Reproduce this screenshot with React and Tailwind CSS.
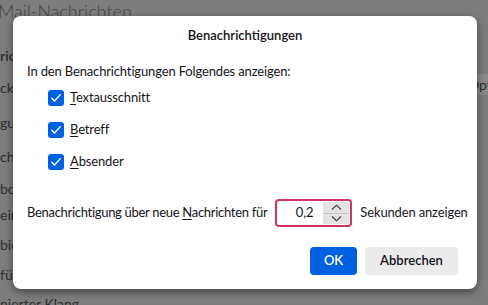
import React from "react";

const bgItems = [
    { text: "ric", h: "h-[32px]", bold: true },
    { text: "ck-", h: "h-[35px]" },
    { text: "gu", h: "h-[34px]" },
    { text: "chr", h: "h-[32px]" },
    { text: "bo", h: "h-[26px]" },
    { text: "ein", h: "h-[30px]" },
    { text: "bie", h: "h-[30px]" },
    { text: "fü", h: "h-[29px]" },
    { text: "nierter Klang", h: "h-[30px]" },
];

const Check = () => (
    <span className="flex h-[16px] w-[16px] items-center justify-center rounded-[3px] bg-[#0061e0]">
        <svg width="12" height="12" viewBox="0 0 12 12" fill="none">
            <path d="M1.8 6.2 L4.6 9 L10.3 2.6" stroke="white" strokeWidth="1.4" strokeLinecap="round" strokeLinejoin="round" />
        </svg>
    </span>
);

const CheckRow = ({ first, rest }) => (
    <label className="flex h-[32px] items-center gap-[6px]">
        <Check />
        <span>
            <u className="underline-offset-2">{first}</u>
            {rest}
        </span>
    </label>
);

const App = () => {
    return (
        <div className="relative h-[305px] w-[488px] overflow-hidden whitespace-nowrap bg-[#7d7d7d] font-['Lato',sans-serif] text-[#2e2e2e]">
            {/* page behind the dialog */}
            <div className="ml-[-2px] text-[18px] font-light leading-[22px] text-[#454545]">Mail-Nachrichten</div>
            <div className="flex flex-col pt-[24px] text-[14px] leading-[20px]">
                {bgItems.map((item) => (
                    <div key={item.text} className={`${item.h} ${item.bold ? "font-semibold" : ""}`}>
                        {item.text}
                    </div>
                ))}
            </div>
            <div className="absolute left-[464px] top-[74px] flex h-[21px] w-[50px] items-center bg-[#8a8a8a] pl-[4px] text-[14px] text-[#2e2e2e]">
                Opti
            </div>

            {/* dialog */}
            <div className="absolute left-[13px] top-[16px] flex h-[273px] w-[464px] flex-col rounded-[8px] bg-white px-[14px] text-[13px] tracking-[-0.15px] text-[#15141a] shadow-[0_3px_8px_rgba(0,0,0,0.45)]">
                <h1 className="pt-[9px] text-center text-[13px] font-semibold leading-[20px] tracking-normal">Benachrichtigungen</h1>
                <p className="mt-[16px] leading-[20px]">In den Benachrichtigungen Folgendes anzeigen:</p>
                <div className="mt-[1px] flex flex-col pl-[21px]">
                    <CheckRow first="T" rest="extausschnitt" />
                    <CheckRow first="B" rest="etreff" />
                    <CheckRow first="A" rest="bsender" />
                </div>
                <div className="mt-[21px] flex items-center">
                    <span className="tracking-[-0.3px]">
                        Benachrichtigung über neue <u className="underline-offset-2">N</u>achrichten für
                    </span>
                    <div className="ml-[8px] flex h-[28px] w-[77px] shrink-0 items-stretch rounded-[4px] border-2 border-[#d0345e]">
                        <div className="flex flex-1 items-center justify-end pr-[10px]">0,2</div>
                        <div className="my-[1px] mr-[1px] flex w-[26px] flex-col bg-[#e3e3e3]">
                            <div className="flex flex-1 items-center justify-center border-b border-[#c4c4c4]">
                                <svg width="11" height="7" viewBox="0 0 11 7" fill="none">
                                    <path d="M1 5.5 L5.5 1.2 L10 5.5" stroke="#333" strokeWidth="1.1" />
                                </svg>
                            </div>
                            <div className="flex flex-1 items-center justify-center">
                                <svg width="11" height="7" viewBox="0 0 11 7" fill="none">
                                    <path d="M1 1.5 L5.5 5.8 L10 1.5" stroke="#333" strokeWidth="1.1" />
                                </svg>
                            </div>
                        </div>
                    </div>
                    <span className="ml-[8px]">Sekunden anzeigen</span>
                </div>
                <div className="mt-auto flex justify-end gap-[8px] pb-[14px] pr-[5px]">
                    <button className="h-[28px] w-[47px] rounded-[4px] bg-[#0061e0] font-semibold tracking-normal text-white">OK</button>
                    <button className="h-[28px] w-[93px] rounded-[4px] bg-[#ebebeb] font-semibold tracking-normal text-[#15141a]">Abbrechen</button>
                </div>
            </div>
        </div>
    );
};

export default App;
